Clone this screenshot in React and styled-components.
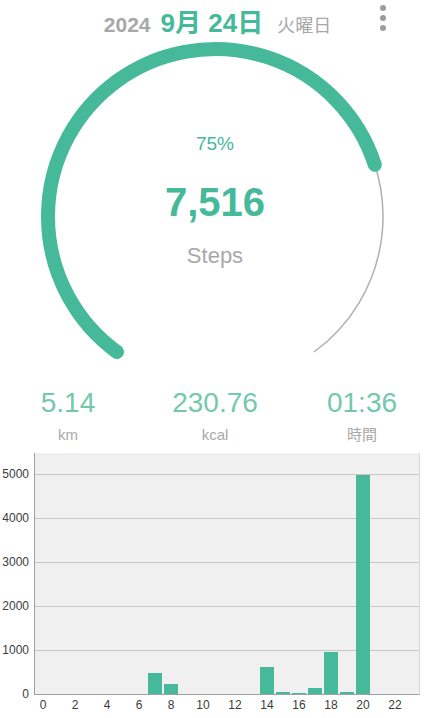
import React from 'react';
import styled, { createGlobalStyle } from 'styled-components';

const GREEN = '#45b99a';
const SOFT_GREEN = '#74c8ad';
const GRAY = '#a8a8a8';

const GlobalStyle = createGlobalStyle`
  body {
    margin: 0;
    background: #fff;
    font-family: "Liberation Sans", "Noto Sans CJK JP", sans-serif;
  }
`;

const Page = styled.div`
  width: 430px;
  overflow: hidden;
`;

const Header = styled.header`
  height: 40px;
  display: grid;
  grid-template-columns: 1fr auto 1fr;
  align-items: center;
`;

const Title = styled.div`
  grid-column: 2;
  display: flex;
  align-items: baseline;
  padding-left: 5px;
`;

const Year = styled.span`
  font-size: 21px;
  font-weight: 700;
  color: ${GRAY};
  margin-right: 10px;
`;

const DateText = styled.span`
  font-size: 26px;
  font-weight: 700;
  color: ${GREEN};
  margin-right: 14px;
  white-space: pre;
`;

const Weekday = styled.span`
  font-size: 18px;
  color: ${GRAY};
`;

const Kebab = styled.button`
  grid-column: 3;
  justify-self: end;
  margin: 0 44px 4px 0;
  padding: 0;
  border: none;
  background: none;
  display: flex;
  flex-direction: column;
  gap: 4px;
`;

const Dot = styled.span`
  width: 6px;
  height: 6px;
  border-radius: 50%;
  background: #9c9c9c;
`;

const GaugeBox = styled.section`
  position: relative;
  height: 346px;
  display: flex;
  flex-direction: column;
  align-items: center;
  padding-top: 92px;
  box-sizing: border-box;
`;

const GaugeSvg = styled.svg`
  position: absolute;
  top: 0;
  left: 0;
`;

const Percent = styled.div`
  position: relative;
  font-size: 19px;
  line-height: 24px;
  color: ${GREEN};
`;

const StepCount = styled.div`
  position: relative;
  margin-top: 22px;
  font-size: 40px;
  line-height: 48px;
  font-weight: 700;
  color: ${GREEN};
`;

const StepLabel = styled.div`
  position: relative;
  margin-top: 16px;
  font-size: 22px;
  line-height: 28px;
  color: ${GRAY};
`;

const Metrics = styled.section`
  display: grid;
  grid-template-columns: repeat(3, 147px);
  justify-content: center;
  text-align: center;
`;

const Metric = styled.div`
  display: flex;
  flex-direction: column;
  gap: 5px;
`;

const MetricValue = styled.span`
  font-size: 28px;
  line-height: 34px;
  color: ${SOFT_GREEN};
`;

const MetricUnit = styled.span`
  font-size: 15px;
  line-height: 20px;
  color: ${GRAY};
`;

const Chart = styled.section`
  margin-top: 8px;
  display: grid;
  grid-template-columns: 34px 386px;
  grid-template-rows: 242px auto;
  font-size: 12px;
  color: #3c3c3c;
`;

const YAxis = styled.div`
  display: flex;
  flex-direction: column;
  margin-top: -1px;
  height: 241px;
`;

const YTick = styled.span`
  flex: 0 0 44px;
  display: flex;
  align-items: center;
  justify-content: flex-end;
  padding-right: 5px;
`;

const Plot = styled.div`
  height: 241px;
  display: flex;
  align-items: flex-end;
  background-color: #f0f0f0;
  background-image: repeating-linear-gradient(
    to top,
    transparent 0 43px,
    #c6c6c6 43px 44px
  );
  border-left: 1px solid #a0a0a0;
  border-bottom: 1px solid #a0a0a0;
  border-right: 1px solid #d6d6d6;
`;

const Slot = styled.div`
  flex: 0 0 16px;
  display: flex;
  justify-content: center;
  align-items: flex-end;
`;

const Bar = styled.div`
  width: 14px;
  background: ${GREEN};
`;

const XAxis = styled.div`
  grid-column: 2;
  display: flex;
  padding-left: 1px;
  margin-top: 3px;
  line-height: 14px;
`;

const XTick = styled.span`
  flex: 0 0 16px;
  display: flex;
  justify-content: center;
  white-space: nowrap;
`;

const hourly = {
  7: 477, 8: 230, 14: 614, 15: 35, 16: 20, 17: 140, 18: 960, 19: 50, 20: 4970,
};

const cx = 215.5;
const cy = 176.5;
const r = 167.5;
const START = -144;
const SWEEP = 288;

const point = (deg) => {
  const rad = (deg * Math.PI) / 180;
  return [cx + r * Math.sin(rad), cy - r * Math.cos(rad)];
};

const arc = (from, to) => {
  const [x0, y0] = point(from);
  const [x1, y1] = point(to);
  return `M ${x0} ${y0} A ${r} ${r} 0 ${to - from > 180 ? 1 : 0} 1 ${x1} ${y1}`;
};

const Gauge = ({ ratio }) => (
  <GaugeSvg width="430" height="346" viewBox="0 0 430 346">
    <path d={arc(START, START + SWEEP)} fill="none" stroke="#b0b0b0" strokeWidth="1.5" />
    <path
      d={arc(START, START + SWEEP * ratio)}
      fill="none"
      stroke={GREEN}
      strokeWidth="14"
      strokeLinecap="round"
    />
  </GaugeSvg>
);

export default function App() {
  const hours = Array.from({ length: 24 }, (_, h) => h);
  return (
    <Page>
      <GlobalStyle />
      <Header>
        <Title>
          <Year>2024</Year>
          <DateText>9月 24日</DateText>
          <Weekday>火曜日</Weekday>
        </Title>
        <Kebab aria-label="menu">
          <Dot />
          <Dot />
          <Dot />
        </Kebab>
      </Header>

      <GaugeBox>
        <Gauge ratio={0.75} />
        <Percent>75%</Percent>
        <StepCount>7,516</StepCount>
        <StepLabel>Steps</StepLabel>
      </GaugeBox>

      <Metrics>
        <Metric>
          <MetricValue>5.14</MetricValue>
          <MetricUnit>km</MetricUnit>
        </Metric>
        <Metric>
          <MetricValue>230.76</MetricValue>
          <MetricUnit>kcal</MetricUnit>
        </Metric>
        <Metric>
          <MetricValue>01:36</MetricValue>
          <MetricUnit>時間</MetricUnit>
        </Metric>
      </Metrics>

      <Chart>
        <YAxis>
          {[5000, 4000, 3000, 2000, 1000, 0].map((v) => (
            <YTick key={v}>{v}</YTick>
          ))}
        </YAxis>
        <Plot>
          {hours.map((h) => (
            <Slot key={h}>
              {hourly[h] && <Bar style={{ height: hourly[h] * 0.044 }} />}
            </Slot>
          ))}
        </Plot>
        <XAxis>
          {hours.map((h) => (
            <XTick key={h}>{h % 2 === 0 ? h : ''}</XTick>
          ))}
        </XAxis>
      </Chart>
    </Page>
  );
}
